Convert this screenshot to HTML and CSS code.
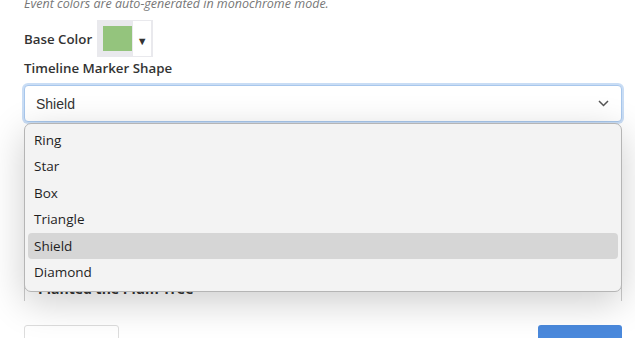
FILE: index.html
```html
<!DOCTYPE html>
<html lang="en">
<head>
    <meta charset="UTF-8">
    <meta name="viewport" content="width=device-width, initial-scale=1.0">
    <title>Timeline Settings</title>
    <link rel="stylesheet" href="styles.css">
</head>
<body>
    <div class="settings-panel">
        <p class="hint">Event colors are auto-generated in monochrome mode.</p>

        <div class="color-row">
            <span class="field-label">Base Color</span>
            <div class="color-picker">
                <span class="swatch"></span>
                <span class="picker-arrow">&#9660;</span>
            </div>
        </div>

        <label class="field-label marker-label" for="marker-shape">Timeline Marker Shape</label>
        <div class="select-wrap">
            <div class="select" id="marker-shape">
                <span>Shield</span>
                <svg class="chevron" width="11" height="7" viewBox="0 0 11 7">
                    <path d="M1 1 L5.5 5.5 L10 1" fill="none" stroke="#555" stroke-width="1.5"/>
                </svg>
            </div>
            <ul class="options">
                <li>Ring</li>
                <li>Star</li>
                <li>Box</li>
                <li>Triangle</li>
                <li class="active">Shield</li>
                <li>Diamond</li>
            </ul>
        </div>

        <div class="event-card">
            <div class="event-item">Sowed the Seeds</div>
            <div class="event-item">Built the Greenhouse</div>
            <div class="event-item">Planted the Plum Tree</div>
        </div>

        <div class="actions">
            <button class="btn btn-secondary">Cancel</button>
            <button class="btn btn-primary">Save</button>
        </div>
    </div>
</body>
</html>
```

FILE: styles.css
```css
body {
    margin: 0;
    background: #ffffff;
    font-family: "Open Sans", "Noto Sans", sans-serif;
    color: #333;
    overflow: hidden;
}
.settings-panel {
    padding: 0 13px 0 24px;
    margin-top: -5px;
}
.hint {
    margin: 0;
    font-size: 12.5px;
    line-height: 18px;
    font-style: italic;
    color: #777;
}
.field-label {
    font-size: 13.3px;
    font-weight: 600;
    color: #333;
}
.color-row {
    display: flex;
    align-items: center;
    gap: 5px;
    margin-top: 7px;
}
.color-picker {
    display: flex;
    align-items: stretch;
    width: 56px;
    height: 37px;
    box-sizing: border-box;
    background: #e9e9ed;
    padding: 1px 2px 1px 0;
}
.swatch {
    width: 29px;
    height: 25px;
    margin: 5px 1px 0 6px;
    background: #94c47d;
}
.picker-arrow {
    flex: 1;
    background: #fff;
    font-size: 11px;
    color: #333;
    display: flex;
    align-items: center;
    justify-content: center;
    padding-top: 3px;
}
.marker-label {
    display: block;
    line-height: 18px;
    margin-top: 2px;
}
.select-wrap {
    position: relative;
    margin-top: 8px;
}
.select {
    display: flex;
    align-items: center;
    justify-content: space-between;
    height: 37px;
    box-sizing: border-box;
    padding: 0 12px 0 11px;
    border: 1px solid #a8c7ec;
    border-radius: 4px;
    box-shadow: 0 0 0 2px #c9ddf5;
    background: #fff;
    font-family: "Liberation Sans", Arial, sans-serif;
    font-size: 14px;
    color: #333;
}
.options {
    position: absolute;
    top: 38px;
    left: 0;
    right: 0;
    margin: 0;
    padding: 3px 3px 6px;
    list-style: none;
    background: #f3f3f3;
    border: 1px solid #b5b5b5;
    border-radius: 7px;
    box-shadow: 0 10px 38px rgba(0, 0, 0, 0.2);
    z-index: 2;
}
.options li {
    height: 26.4px;
    line-height: 26.4px;
    padding-left: 6px;
    font-size: 13.5px;
    color: #1f1f1f;
    border-radius: 4px;
}
.options li.active {
    background: #d6d6d6;
}
.event-card {
    margin-top: 16px;
    height: 163px;
    box-sizing: border-box;
    border: 1px solid #ccc;
    border-bottom: none;
    padding: 0 13px 3px;
    display: flex;
    flex-direction: column;
    justify-content: flex-end;
    gap: 10px;
}
.event-item {
    font-size: 14px;
    font-weight: 700;
    line-height: 18px;
    color: #333;
}
.actions {
    display: flex;
    justify-content: space-between;
    margin-top: 24px;
}
.btn {
    height: 42px;
    border-radius: 3px;
    font-family: "Open Sans", sans-serif;
    font-size: 14px;
    cursor: pointer;
}
.btn-secondary {
    width: 95px;
    background: #fff;
    border: 1px solid #ddd;
    color: #333;
}
.btn-primary {
    width: 84px;
    background: #4a89dc;
    border: none;
    color: #fff;
}
```
